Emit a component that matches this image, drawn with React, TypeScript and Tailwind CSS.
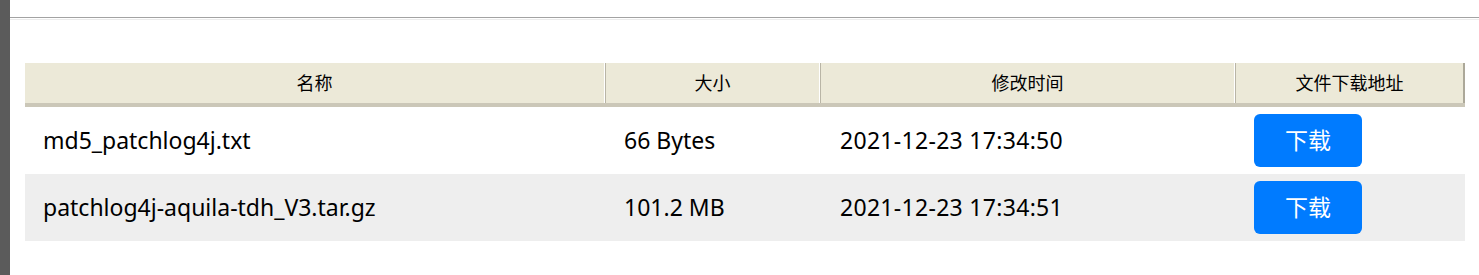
import React from "react";

const rows = [
  { name: "md5_patchlog4j.txt", size: "66 Bytes", time: "2021-12-23 17:34:50" },
  { name: "patchlog4j-aquila-tdh_V3.tar.gz", size: "101.2 MB", time: "2021-12-23 17:34:51" },
];

const headers = [
  { label: "名称", w: "w-[580px]" },
  { label: "大小", w: "w-[215px]" },
  { label: "修改时间", w: "w-[415px]" },
  { label: "文件下载地址", w: "w-[230px]" },
];

export default function App() {
  return (
    <div
      className="flex h-[275px] bg-white text-black"
      style={{ fontFamily: '"Noto Sans", "Noto Sans CJK SC", sans-serif' }}
    >
      <div className="w-[10px] shrink-0 bg-[#5b5b5b]" />
      <div className="flex-1">
        <div className="h-[18px] border-b border-[#a3a3a3]" />
        <div className="h-[2px] border-b border-[#ececec]" />
        <div className="pl-[15px] pt-[43px]">
          <div className="w-[1440px]">
            <div className="flex h-[44px] border-b-4 border-[#cbc7b8] bg-[#ece9d8]">
              {headers.map((h, i) => (
                <div
                  key={h.label}
                  className={`${h.w} flex items-center justify-center text-[18px] ${
                    i > 0 ? "border-l border-[#b9b5a6]" : ""
                  } ${i < 3 ? "border-r border-r-white" : "border-r-2 border-r-[#aca899]"}`}
                >
                  {h.label}
                </div>
              ))}
            </div>
            {rows.map((r, i) => (
              <div
                key={r.name}
                className={`flex h-[67px] items-center text-[23px] ${i === 1 ? "bg-[#eeeeee]" : "bg-white"}`}
              >
                <div className="w-[580px] pl-[18px]">{r.name}</div>
                <div className="w-[215px] pl-[19px]">{r.size}</div>
                <div className="w-[415px] pl-[20px] tracking-[0.3px]">{r.time}</div>
                <div className="w-[230px] pl-[19px]">
                  <button className="flex h-[53px] w-[108px] items-center justify-center rounded-[6px] bg-[#007bff] text-[23px] text-white">
                    下载
                  </button>
                </div>
              </div>
            ))}
          </div>
        </div>
      </div>
    </div>
  );
}
